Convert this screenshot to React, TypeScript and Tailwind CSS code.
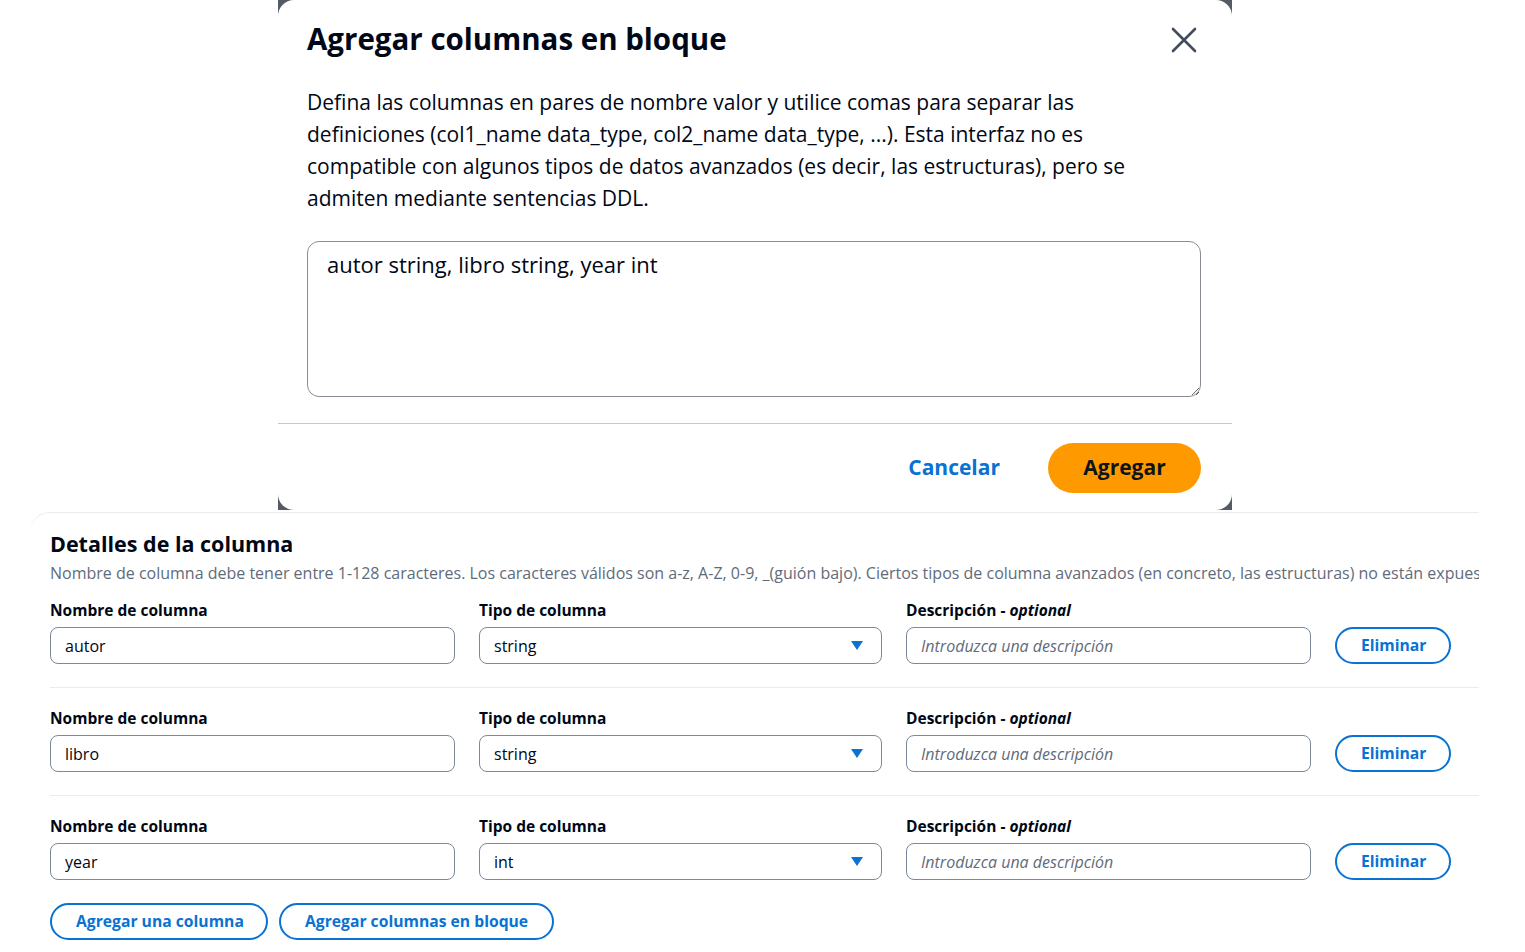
const font = { fontFamily: '"Open Sans", "Noto Sans", Arial, sans-serif' };

const CloseIcon = () => (
  <svg width="28" height="28" viewBox="0 0 28 28" fill="none" stroke="#414d5c" strokeWidth={2.6} strokeLinecap="round">
    <path d="M3 3l22 22M25 3L3 25" />
  </svg>
);

const Caret = () => (
  <svg width="12" height="9" viewBox="0 0 12 9">
    <path d="M0 0h12L6 9z" fill="#0972d3" />
  </svg>
);

const Label = ({ children }: { children: React.ReactNode }) => (
  <label className="block text-[15.5px] leading-[22px] font-bold text-[#000716] mb-[6px]">{children}</label>
);

const TextInput = ({ value }: { value: string }) => (
  <input
    type="text"
    defaultValue={value}
    className="w-full h-[37px] px-[14px] text-[16px] text-[#000716] bg-white border border-[#7d8998] rounded-[8px] focus:outline-none"
  />
);

const Select = ({ value }: { value: string }) => (
  <div className="flex items-center justify-between w-full h-[37px] px-[14px] text-[16px] text-[#000716] bg-white border border-[#7d8998] rounded-[8px]">
    <span>{value}</span>
    <span className="mr-[4px] flex items-center"><Caret /></span>
  </div>
);

const PillButton = ({ children, className = "" }: { children: React.ReactNode; className?: string }) => (
  <button
    type="button"
    className={`h-[37px] px-[24px] text-[15.7px] font-bold whitespace-nowrap text-[#0972d3] bg-white border-2 border-[#0972d3] rounded-full ${className}`}
  >
    {children}
  </button>
);

const ColumnRow = ({ name, type, last }: { name: string; type: string; last?: boolean }) => (
  <div className={last ? "" : "pb-[23px] mb-[19px] border-b border-[#e9ebed]"}>
    <div className="grid grid-cols-[405px_403px_405px_116px] gap-x-[24px] items-end">
      <div>
        <Label>Nombre de columna</Label>
        <TextInput value={name} />
      </div>
      <div>
        <Label>Tipo de columna</Label>
        <Select value={type} />
      </div>
      <div>
        <Label>
          Descripción - <i>optional</i>
        </Label>
        <input
          type="text"
          placeholder="Introduzca una descripción"
          className="w-full h-[37px] px-[14px] text-[16px] bg-white border border-[#7d8998] rounded-[8px] placeholder:italic placeholder:text-[#5f6b7a] focus:outline-none"
        />
      </div>
      <PillButton className="w-[116px] px-0">Eliminar</PillButton>
    </div>
  </div>
);

export default function App() {
  return (
    <div className="w-[1525px] h-[952px] bg-white overflow-hidden text-[#000716]" style={font}>
      {/* Modal (cropped over dark overlay) */}
      <div className="ml-[278px] w-[954px] h-[510px] bg-[#545b64]">
        <div className="h-full bg-white rounded-[16px] flex flex-col">
          <div className="px-[29px] pr-[31px] pt-[19px]">
            <div className="flex items-center justify-between">
              <h1 className="text-[29.5px] leading-[40px] font-bold">Agregar columnas en bloque</h1>
              <button type="button" className="mr-[3px] mt-[1px]">
                <CloseIcon />
              </button>
            </div>
            <p className="mt-[27px] text-[21px] leading-[32px]">
              Defina las columnas en pares de nombre valor y utilice comas para separar las
              <br />
              definiciones (col1_name data_type, col2_name data_type, ...). Esta interfaz no es
              <br />
              compatible con algunos tipos de datos avanzados (es decir, las estructuras), pero se
              <br />
              admiten mediante sentencias DDL.
            </p>
            <textarea
              defaultValue="autor string, libro string, year int"
              className="mt-[27px] block w-full h-[156px] px-[19px] py-[7px] text-[22px] leading-[30px] border border-[#8c8c94] rounded-[12px] focus:outline-none"
            />
          </div>
          <div className="mt-[26px] border-t border-[#c6c6cd]" />
          <div className="flex items-center justify-end gap-[48px] pr-[31px] pt-[19px]">
            <button type="button" className="text-[21px] font-bold text-[#0972d3]">Cancelar</button>
            <button
              type="button"
              className="w-[153px] h-[50px] rounded-full bg-[#ff9900] text-[21px] font-bold text-[#0f141a]"
            >
              Agregar
            </button>
          </div>
        </div>
      </div>

      {/* Column details panel */}
      <div className="mt-[2px] ml-[30px] w-[1449px] h-[440px] border-t border-[#e9ebed] rounded-tl-[20px] overflow-hidden">
        <div className="pl-[20px] pt-[16px]">
          <h2 className="text-[21.5px] leading-[30px] font-bold">Detalles de la columna</h2>
          <p className="mt-[3px] text-[16px] leading-[22px] text-[#5f6b7a] whitespace-nowrap">
            Nombre de columna debe tener entre 1-128 caracteres. Los caracteres válidos son a-z, A-Z, 0-9, _(guión
            bajo). Ciertos tipos de columna avanzados (en concreto, las estructuras) no están expuestos en esta interfaz.
          </p>
          <div className="mt-[15px]">
            <ColumnRow name="autor" type="string" />
            <ColumnRow name="libro" type="string" />
            <ColumnRow name="year" type="int" last />
          </div>
          <div className="mt-[23px] flex gap-[11px]">
            <PillButton className="w-[218px] px-0">Agregar una columna</PillButton>
            <PillButton className="w-[275px] px-0">Agregar columnas en bloque</PillButton>
          </div>
        </div>
      </div>
    </div>
  );
}
